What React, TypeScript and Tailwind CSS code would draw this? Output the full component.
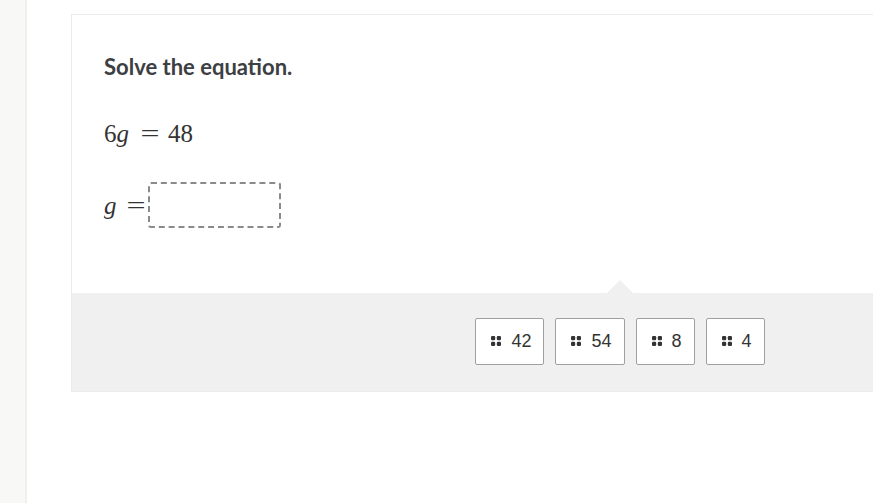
import { ReactNode } from "react";

const choices = ["42", "54", "8", "4"];

function Grip() {
  return (
    <svg width="10" height="10" viewBox="0 0 10 10" className="shrink-0">
      <rect x="0" y="0" width="4.2" height="4.2" rx="1.2" fill="#333" />
      <rect x="5.8" y="0" width="4.2" height="4.2" rx="1.2" fill="#333" />
      <rect x="0" y="5.8" width="4.2" height="4.2" rx="1.2" fill="#333" />
      <rect x="5.8" y="5.8" width="4.2" height="4.2" rx="1.2" fill="#333" />
    </svg>
  );
}

function Tex({ children }: { children: ReactNode }) {
  return (
    <span
      className="font-['Liberation_Serif','DejaVu_Serif',serif] text-[25px] text-[#333] leading-none flex items-center"
      style={{ fontFamily: '"Liberation Serif", "DejaVu Serif", serif' }}
    >
      {children}
    </span>
  );
}

function Eq({ className }: { className: string }) {
  return <span className={`inline-block scale-x-[1.35] ${className}`}>=</span>;
}

export default function App() {
  return (
    <div className="w-screen h-screen overflow-hidden flex bg-white">
      {/* Left rail */}
      <div className="w-[27px] shrink-0 bg-[#f8f8f7] border-r-2 border-[#efefef]" />

      <div className="flex-1 pl-[44px] pt-[14px]">
        <div className="w-[1100px] border border-[#ebebeb] bg-white">
          {/* Question */}
          <div className="pl-[32px] pt-[38px] pb-[65px]">
            <h1 className="text-[22px] font-bold text-[#3d4043] leading-[28px]" style={{ fontFamily: "Lato, sans-serif" }}>
              Solve the equation.
            </h1>
            <div className="mt-[38px] h-[28px] flex items-center">
              <Tex>
                6<i>g</i>
                <Eq className="ml-[14px] mr-[11px]" />
                48
              </Tex>
            </div>
            <div className="mt-[35px] flex items-center">
              <Tex>
                <i>g</i>
                <Eq className="ml-[12px]" />
              </Tex>
              <div className="ml-[5px] w-[133px] h-[46px] rounded-[3px] border-2 border-dashed border-[#8a8a8a]" />
            </div>
          </div>

          {/* Answer tray */}
          <div className="relative h-[98px] bg-[#f0f0f0] flex items-center justify-center pb-[2px]">
            <div className="absolute left-[535px] -top-[13px] w-0 h-0 border-l-[13px] border-r-[13px] border-b-[13px] border-l-transparent border-r-transparent border-b-[#f0f0f0]" />
            <div className="flex gap-[11px] -ml-[2px]">
              {choices.map((c) => (
                <div
                  key={c}
                  className="h-[47px] pl-[15px] pr-[12px] flex items-center gap-[10px] bg-white border border-[#a0a0a0] rounded-[2px] text-[18px] text-[#333]"
                  style={{ fontFamily: '"Liberation Sans", Arial, sans-serif' }}
                >
                  <Grip />
                  <span>{c}</span>
                </div>
              ))}
            </div>
          </div>
        </div>
      </div>
    </div>
  );
}
